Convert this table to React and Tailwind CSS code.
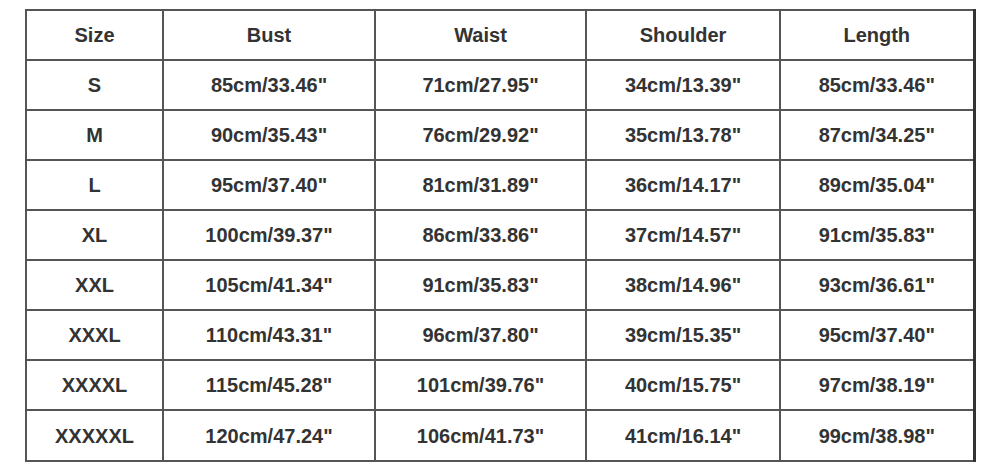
import React from 'react';

const header = ['Size', 'Bust', 'Waist', 'Shoulder', 'Length'];
const widths = ['w-[137px]', 'w-[212px]', 'w-[211px]', 'w-[194px]', 'w-[194px]'];

const rows = [
  ['S', '85cm/33.46"', '71cm/27.95"', '34cm/13.39"', '85cm/33.46"'],
  ['M', '90cm/35.43"', '76cm/29.92"', '35cm/13.78"', '87cm/34.25"'],
  ['L', '95cm/37.40"', '81cm/31.89"', '36cm/14.17"', '89cm/35.04"'],
  ['XL', '100cm/39.37"', '86cm/33.86"', '37cm/14.57"', '91cm/35.83"'],
  ['XXL', '105cm/41.34"', '91cm/35.83"', '38cm/14.96"', '93cm/36.61"'],
  ['XXXL', '110cm/43.31"', '96cm/37.80"', '39cm/15.35"', '95cm/37.40"'],
  ['XXXXL', '115cm/45.28"', '101cm/39.76"', '40cm/15.75"', '97cm/38.19"'],
  ['XXXXXL', '120cm/47.24"', '106cm/41.73"', '41cm/16.14"', '99cm/38.98"'],
];

export default function App() {
  return (
    <div className="w-[1000px] h-[471px] bg-white pt-[9px] pl-[25px]" style={{ fontFamily: '"Liberation Sans", Arial, sans-serif' }}>
      <table className="border-collapse table-fixed w-[949px] text-[20px] font-bold text-[#333]">
        <thead>
          <tr className="h-[50px]">
            {header.map((h, i) => (
              <th key={h} className={`${widths[i]} border-2 border-[#555] text-center align-middle font-bold ${i === 4 ? 'border-r-[3px] border-r-[#333]' : ''}`}>{h}</th>
            ))}
          </tr>
        </thead>
        <tbody>
          {rows.map((r, ri) => (
            <tr key={r[0]} className={ri === rows.length - 1 ? 'h-[51px]' : 'h-[50px]'}>
              {r.map((c, i) => (
                <td key={i} className={`border-2 border-[#555] text-center align-middle ${i === 4 ? 'border-r-[3px] border-r-[#333]' : ''}`}>{c}</td>
              ))}
            </tr>
          ))}
        </tbody>
      </table>
    </div>
  );
}
